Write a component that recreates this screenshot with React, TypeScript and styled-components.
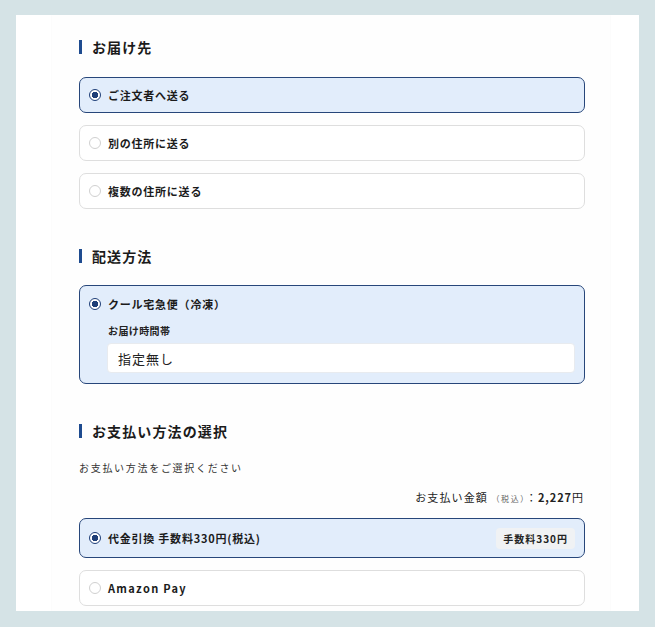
import { FC } from 'react';
import styled, { createGlobalStyle } from 'styled-components'

const GlobalStyle = createGlobalStyle`
  html, body {
    margin: 0;
    padding: 0;
    background: #d5e3e6;
  }
  body {
    font-family: "Noto Sans CJK JP", "Noto Sans", sans-serif;
    color: #222;
  }
`

const destinations = [
  { id: 'self', label: 'ご注文者へ送る', selected: true },
  { id: 'other', label: '別の住所に送る', selected: false },
  { id: 'multi', label: '複数の住所に送る', selected: false },
]

const App: FC = () => {
  return (
    <PageSC>
      <GlobalStyle />
      <PanelSC>
        <ColumnSC>
          <HeadingSC>お届け先</HeadingSC>
          <OptionListSC>
            {destinations.map(d => (
              <OptionSC key={d.id} $selected={d.selected}>
                <OptionRowSC>
                  <RadioSC $checked={d.selected} />
                  <OptionLabelSC>{d.label}</OptionLabelSC>
                </OptionRowSC>
              </OptionSC>
            ))}
          </OptionListSC>

          <HeadingSC $top={37}>配送方法</HeadingSC>
          <OptionListSC $top={19}>
            <OptionSC $selected $pad="10px 9px 10px 9px">
              <OptionRowSC>
                <RadioSC $checked />
                <OptionLabelSC>クール宅急便（冷凍）</OptionLabelSC>
              </OptionRowSC>
              <TimeFieldSC>
                <FieldLabelSC>お届け時間帯</FieldLabelSC>
                <SelectBoxSC>指定無し</SelectBoxSC>
              </TimeFieldSC>
            </OptionSC>
          </OptionListSC>

          <HeadingSC $top={37}>お支払い方法の選択</HeadingSC>
          <NoteSC>お支払い方法をご選択ください</NoteSC>
          <TotalSC>
            お支払い金額 <TaxSC>（税込）</TaxSC>：<AmountSC>2,227</AmountSC>円
          </TotalSC>
          <OptionListSC $top={12}>
            <OptionSC $selected $height={40}>
              <OptionRowSC>
                <RadioSC $checked />
                <OptionLabelSC>代金引換 手数料330円(税込)</OptionLabelSC>
                <FeeBadgeSC>手数料330円</FeeBadgeSC>
              </OptionRowSC>
            </OptionSC>
            <OptionSC>
              <OptionRowSC>
                <RadioSC />
                <OptionLabelSC $latin>Amazon Pay</OptionLabelSC>
              </OptionRowSC>
            </OptionSC>
          </OptionListSC>
        </ColumnSC>
      </PanelSC>
    </PageSC>
  );
};

export default App;

const PageSC = styled('div')`
  width: 655px;
  height: 627px;
  box-sizing: border-box;
  padding: 15px 16px 16px;
  overflow: hidden;
`
const PanelSC = styled('div')`
  height: 596px;
  background: #fff;
  overflow: hidden;
  padding-left: 36px;
  box-sizing: border-box;
`
const ColumnSC = styled('div')`
  width: 558px;
  min-height: 100%;
  box-sizing: border-box;
  padding: 22px 25px 0 27px;
  background: #fefefe;
  box-shadow: 0 0 2px rgba(0, 0, 0, 0.04);
`
const HeadingSC = styled('h2')<{ $top?: number }>`
  margin: ${p => p.$top ?? 0}px 0 0;
  height: 20px;
  display: flex;
  align-items: center;
  font-size: 14px;
  font-weight: 700;
  letter-spacing: 0.08em;
  color: #1b1b1b;
  &::before {
    content: '';
    width: 3px;
    height: 14px;
    background: #1e4b8f;
    margin-right: 10px;
  }
`
const OptionListSC = styled('div')<{ $top?: number }>`
  margin-top: ${p => p.$top ?? 20}px;
  display: flex;
  flex-direction: column;
  gap: 12px;
`
const OptionSC = styled('div')<{ $selected?: boolean; $pad?: string; $height?: number }>`
  box-sizing: border-box;
  min-height: ${p => p.$height ?? 36}px;
  padding: ${p => p.$pad ?? '0 9px'};
  display: flex;
  flex-direction: column;
  justify-content: center;
  border-radius: 7px;
  border: 1px solid ${p => (p.$selected ? '#27467a' : '#dedede')};
  background: ${p => (p.$selected ? '#e2edfb' : '#fff')};
`
const OptionRowSC = styled('div')`
  display: flex;
  align-items: center;
  height: 16px;
`
const RadioSC = styled('span')<{ $checked?: boolean }>`
  width: 12px;
  height: 12px;
  box-sizing: border-box;
  border-radius: 50%;
  flex-shrink: 0;
  margin-right: 7px;
  border: ${p => (p.$checked ? '1.5px solid #1f3f78' : '1px solid #d0d0d0')};
  background: ${p => (p.$checked ? 'radial-gradient(circle, #1f3f78 0 3px, #fff 3.5px)' : '#fff')};
`
const OptionLabelSC = styled('span')<{ $latin?: boolean }>`
  font-size: 11px;
  font-weight: 700;
  letter-spacing: ${p => (p.$latin ? '0.12em' : '0.07em')};
  color: #1b1b1b;
  flex: 1;
`
const TimeFieldSC = styled('div')`
  padding-left: 18px;
  margin-top: 12px;
`
const FieldLabelSC = styled('div')`
  font-size: 10px;
  font-weight: 700;
  line-height: 14px;
  letter-spacing: 0.04em;
  color: #222;
  padding-left: 1px;
`
const SelectBoxSC = styled('div')`
  margin-top: 5px;
  height: 30px;
  box-sizing: border-box;
  background: #fff;
  border: 1px solid #e8ebef;
  border-radius: 4px;
  padding-left: 10px;
  display: flex;
  align-items: center;
  font-size: 13px;
  letter-spacing: 0.08em;
  color: #222;
`
const NoteSC = styled('p')`
  margin: 20px 0 0;
  font-size: 10px;
  line-height: 14px;
  letter-spacing: 0.17em;
  color: #333;
`
const TotalSC = styled('div')`
  margin-top: 15px;
  text-align: right;
  font-size: 11px;
  line-height: 14px;
  letter-spacing: 0.1em;
  color: #222;
  padding-right: 1px;
`
const TaxSC = styled('span')`
  font-size: 8px;
  letter-spacing: 0.2em;
  color: #666;
`
const AmountSC = styled('span')`
  font-size: 11px;
  font-weight: 700;
  letter-spacing: 0.08em;
`
const FeeBadgeSC = styled('span')`
  margin-left: auto;
  height: 21px;
  padding: 0 7px;
  display: flex;
  align-items: center;
  background: #f0f2f4;
  border-radius: 4px;
  font-size: 10px;
  font-weight: 700;
  letter-spacing: 0.1em;
  color: #222;
`
